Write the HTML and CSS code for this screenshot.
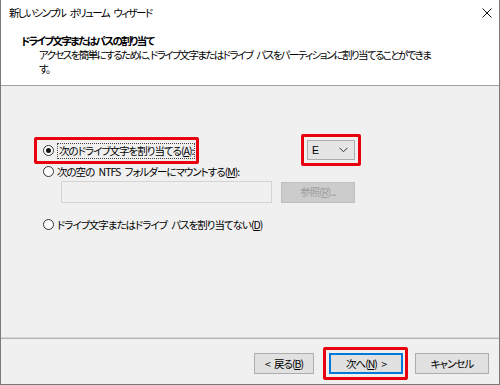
FILE: index.html
```html
<!DOCTYPE html>
<html lang="ja">
<head>
  <meta charset="UTF-8">
  <title>新しいシンプル ボリューム ウィザード</title>
  <link rel="stylesheet" href="styles.css">
</head>
<body>
  <div class="window">
    <div class="titlebar">
      <span class="title">新しいシンプル ボリューム ウィザード</span>
      <svg class="close" width="10" height="10" viewBox="0 0 10 10">
        <path d="M0.5 0.5 L9.5 9.5 M9.5 0.5 L0.5 9.5" stroke="#111" stroke-width="1" fill="none"/>
      </svg>
    </div>

    <div class="header">
      <div class="header-title">ドライブ文字またはパスの割り当て</div>
      <div class="header-desc">
        <div>アクセスを簡単にするために、ドライブ文字またはドライブ パスをパーティションに割り当てることができま</div>
        <div>す。</div>
      </div>
    </div>

    <div class="content">
      <div class="row row-first">
        <div class="label-col">
          <span class="mark mark-radio">
            <span class="radio checked"></span>
            <span class="focus">次のドライブ文字を割り当てる(<u>A</u>):</span>
          </span>
        </div>
        <span class="mark mark-combo">
          <span class="combo">
            <span>E</span>
            <svg width="9" height="6" viewBox="0 0 9 6">
              <path d="M0.5 0.8 L4.5 4.8 L8.5 0.8" stroke="#333" stroke-width="1" fill="none"/>
            </svg>
          </span>
        </span>
      </div>

      <div class="row row-second">
        <span class="radio"></span>
        <span>次の空の NTFS フォルダーにマウントする(<u>M</u>):</span>
      </div>
      <div class="path-row">
        <span class="path-box"></span>
        <span class="btn btn-disabled">参照(<u>R</u>)...</span>
      </div>

      <div class="row row-third">
        <span class="radio"></span>
        <span>ドライブ文字またはドライブ パスを割り当てない(<u>D</u>)</span>
      </div>
    </div>

    <div class="footer">
      <span class="btn btn-back">&lt; 戻る(<u>B</u>)</span>
      <span class="mark mark-next">
        <span class="btn btn-default">次へ(<u>N</u>) &gt;</span>
      </span>
      <span class="btn btn-cancel">キャンセル</span>
    </div>
  </div>
</body>
</html>
```

FILE: styles.css
```css
body {
  margin: 0;
  font-family: "Noto Sans CJK JP", "Liberation Sans", sans-serif;
  font-size: 10.5px;
  letter-spacing: -1px;
  word-spacing: 3px;
  font-feature-settings: "palt";
  color: #000;
  background: #fff;
}
.window {
  width: 500px;
  height: 385px;
  box-sizing: border-box;
  border-left: 1px solid #7a7a7a;
  border-right: 1px solid #7a7a7a;
  border-bottom: 1px solid #7a7a7a;
  display: flex;
  flex-direction: column;
}
.titlebar {
  height: 30px;
  box-sizing: border-box;
  padding: 5px 7px 0 8px;
  display: flex;
  justify-content: space-between;
  line-height: 16px;
  letter-spacing: -1.6px;
  word-spacing: 3.5px;
}
.close {
  margin-top: 3px;
}
.header {
  height: 56px;
  box-sizing: border-box;
  border-bottom: 1px solid #a0a0a0;
  padding: 4px 0 0 20px;
  line-height: 14px;
  letter-spacing: -1.6px;
  word-spacing: 3.5px;
}
.header-title {
  font-weight: bold;
}
.header-desc {
  padding-left: 18px;
  white-space: nowrap;
}
.content {
  flex: 1;
  background: #f0f0f0;
  padding: 54px 0 0 42px;
}
.row {
  display: flex;
  align-items: center;
  height: 20px;
}
.label-col {
  width: 264px;
}
.row-second {
  margin-top: 2px;
  height: 19px;
}
.row-third {
  margin-top: 11px;
}
.radio {
  width: 11px;
  height: 11px;
  box-sizing: border-box;
  border: 1px solid #333;
  border-radius: 50%;
  background: #fff;
  margin-right: 3px;
  flex: none;
  display: flex;
  align-items: center;
  justify-content: center;
}
.radio.checked::after {
  content: "";
  width: 5px;
  height: 5px;
  border-radius: 50%;
  background: #111;
}
.focus {
  border: 1px dotted #444;
  padding: 0 1px;
  line-height: 14px;
}
.mark {
  position: relative;
  display: inline-flex;
  align-items: center;
}
.mark::after {
  content: "";
  position: absolute;
  border: 3px solid #e8000e;
  border-radius: 2px;
}
.mark-radio::after {
  left: -9px;
  right: -4px;
  top: -6px;
  bottom: -5px;
}
.mark-combo::after {
  left: -6px;
  right: -6px;
  top: -6px;
  bottom: -6px;
}
.mark-next::after {
  left: -6px;
  right: -5px;
  top: -6px;
  bottom: -6px;
}
.combo {
  width: 48px;
  height: 20px;
  box-sizing: border-box;
  background: #e5e5e5;
  border: 1px solid #adadad;
  display: flex;
  align-items: center;
  justify-content: space-between;
  padding: 0 6px 0 4px;
  font-family: "Liberation Sans", sans-serif;
  letter-spacing: 0;
}
.path-row {
  display: flex;
  align-items: center;
  padding-left: 18px;
}
.path-box {
  width: 211px;
  height: 22px;
  box-sizing: border-box;
  border: 1px solid #d4d4d4;
  background: #f0f0f0;
}
.btn {
  width: 74px;
  height: 21px;
  box-sizing: border-box;
  border: 1px solid #adadad;
  background: #e1e1e1;
  display: flex;
  align-items: center;
  justify-content: center;
  line-height: 14px;
}
.btn-disabled {
  margin-left: 9px;
  background: #cccccc;
  border-color: #bfbfbf;
  color: #9d9d9d;
}
.footer {
  height: 47px;
  box-sizing: border-box;
  border-top: 1px solid #d6d6d6;
  box-shadow: inset 0 1px 0 #b4b4b4;
  background: #f0f0f0;
  padding: 15px 10px 0 0;
  display: flex;
  justify-content: flex-end;
  align-items: flex-start;
}
.btn-back {
  width: 60px;
  margin-right: 15px;
}
.btn-default {
  border: 2px solid #0078d7;
}
.btn-cancel {
  margin-left: 12px;
}
```
